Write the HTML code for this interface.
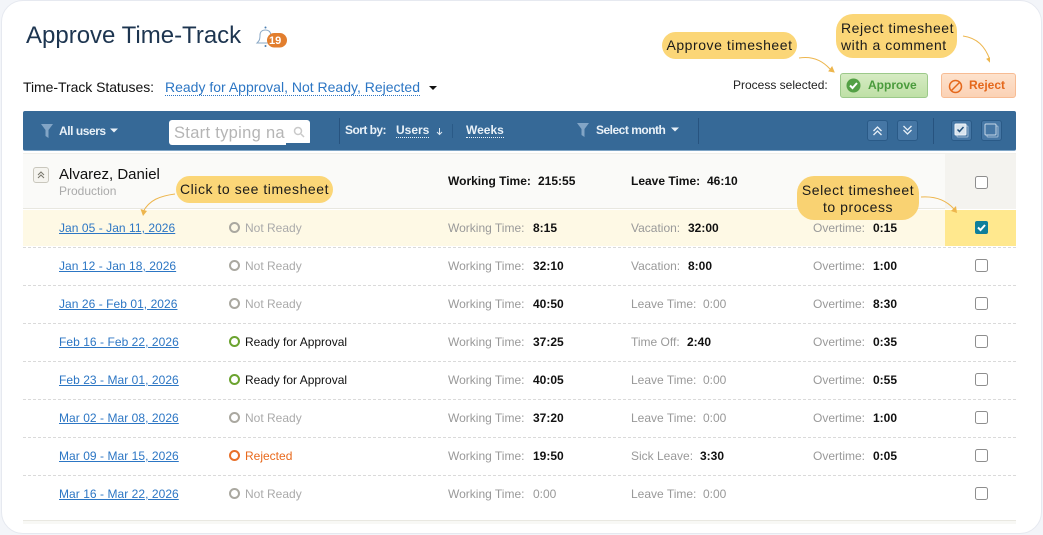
<!DOCTYPE html>
<html><head><meta charset="utf-8">
<style>
html,body{margin:0;padding:0;width:1043px;height:535px;overflow:hidden;background:#f3f5f9}
*{box-sizing:border-box}
#c{position:absolute;left:1px;top:0;width:1041px;height:534px;background:#fff;border:1px solid #e6e9f0;border-radius:22px}
.t,.a{position:absolute}
.t{white-space:nowrap;font-family:"Liberation Sans",sans-serif;font-size:12px;line-height:14px;color:#000}
.g{color:#999}
.b{font-weight:bold;color:#111}
.l{color:#2c76c4;text-decoration:underline;font-size:12px;letter-spacing:.05px}
.call{position:absolute;background:#fbd677;border-radius:14px;font-family:"Liberation Sans",sans-serif;font-size:14px;letter-spacing:.55px;line-height:17px;color:#1a1a1a;text-align:center;white-space:nowrap}
.cb{position:absolute;left:975px;width:13px;height:13px;border:1.5px solid #8e8e8e;border-radius:2.5px;background:#fff}
.dash{position:absolute;left:23px;width:993px;height:1px;background:repeating-linear-gradient(90deg,#dadada 0 3px,transparent 3px 5px)}
.dot{position:absolute;left:229px;width:11px;height:11px;border-radius:50%;border:2px solid #aaa8a0}
.tb{position:absolute;top:120px;width:21px;height:21px;background:#4677a5;border:1px solid #2a5a87;border-radius:3px}
.sep{position:absolute;width:1px;background:#27537f}
.w{color:#e9f1f8;font-weight:bold}
</style></head><body>
<div id="c"></div>
<div class="t" style="left:26px;top:21px;font-size:24px;line-height:30px;color:#1d3550">Approve Time-Track</div>
<svg class="a" style="left:255px;top:26px" width="36" height="24" viewBox="0 0 36 24"><circle cx="10.5" cy="1.5" r="1" fill="#4a7fb0"/><path d="M2 17c2-2 3-3 3-8 0-3 2-5 5.500-5s5 2 5.500 5c.5 4 1 6 3 8z" fill="none" stroke="#8aa8c6" stroke-width="1"/><circle cx="10.500" cy="20" r="1" fill="#4a7fb0"/><rect x="12" y="7" width="20" height="14.500" rx="7.250" fill="#e27e2e"/></svg>
<div class="t" style="left:269px;top:34px;font-size:11px;font-weight:bold;color:#fff">19</div>

<div class="t" style="left:23px;top:79px;font-size:14px;line-height:16px;color:#111;letter-spacing:-.05px">Time-Track Statuses:</div>
<div class="t" style="left:165px;top:79px;font-size:14px;line-height:16px;color:#2c76c4;border-bottom:1px dotted #2c76c4">Ready for Approval, Not Ready, Rejected</div>
<svg class="a" style="left:429px;top:85px" width="9" height="6"><path d="M0 1h8L4 5z" fill="#111"/></svg>

<div class="call" style="left:662px;top:32px;width:135px;height:27px;line-height:27px">Approve timesheet</div>
<div class="call" style="left:836px;top:14px;width:121px;height:44px;padding:6px 0 0 5px;border-radius:17px;text-align:left">Reject timesheet<br>with a comment</div>
<svg class="a" style="left:790px;top:30px" width="200" height="45" fill="none" stroke="#edb64e" stroke-width="1"><path d="M9 28c12-2 22 1 31 11"/><path d="M173 6c14 2 22 10 27 24" /><path d="M39 41l5 1-2-5z" fill="#edb64e"/><path d="M198 30l3 3 2-5z" fill="#edb64e" transform="translate(-1,-1)"/></svg>

<div class="t" style="left:733px;top:78px;color:#222">Process selected:</div>
<div class="a" style="left:840px;top:73px;width:88px;height:25px;border:1px solid #9cc98a;border-radius:3px;background:linear-gradient(#d6ebc3,#bfe0a6)"></div>
<svg class="a" style="left:846px;top:78px" width="15" height="15"><circle cx="7.500" cy="7.500" r="7" fill="#53a045"/><path d="M4 7.500l2.500 2.500 4.500-5" fill="none" stroke="#fff" stroke-width="2"/></svg>
<div class="t" style="left:868px;top:78px;font-weight:bold;color:#4a9b3c">Approve</div>
<div class="a" style="left:941px;top:73px;width:75px;height:25px;border:1px solid #f7bc94;border-radius:3px;background:linear-gradient(#fde2cd,#fbd2b5)"></div>
<svg class="a" style="left:948px;top:79px" width="15" height="15" fill="none" stroke="#e4681c" stroke-width="1.500"><circle cx="7.500" cy="7.500" r="6"/><path d="M3.500 11.500l8-8"/></svg>
<div class="t" style="left:969px;top:78px;font-weight:bold;color:#e4681c">Reject</div>

<div class="a" style="left:23px;top:111px;width:993px;height:40px;background:#366997;border-radius:2px;border-bottom:1px solid #7fa5c6"></div>
<svg class="a" style="left:41px;top:124px" width="12" height="14"><path d="M0 0h12L7.500 6v8l-3-2V6z" fill="#82a5c6"/></svg>
<div class="t w" style="left:59px;top:124px;letter-spacing:-.45px">All users</div>
<svg class="a" style="left:110px;top:128px" width="9" height="6"><path d="M0 .5h8L4 4.500z" fill="#e9f1f8"/></svg>
<div class="a" style="left:169px;top:120px;width:141px;height:25px;background:#fff;border-radius:3px"></div>
<div class="a" style="left:286px;top:143px;width:25px;height:3px;background:#366997"></div>
<div class="t" style="left:174px;top:123px;width:111px;overflow:hidden;font-size:16.500px;line-height:20px;color:#b5b5b5;letter-spacing:.3px">Start typing name</div>
<svg class="a" style="left:293px;top:126px" width="12" height="12" fill="none" stroke="#c9c9c9" stroke-width="1.500"><circle cx="5" cy="5" r="3.500"/><path d="M8 8l3 3"/></svg>
<div class="sep" style="left:339px;top:118px;height:26px"></div>
<div class="t w" style="left:345px;top:123px;letter-spacing:-.55px">Sort by:</div>
<div class="t w" style="left:396px;top:123px;border-bottom:1px dotted #e9f1f8">Users</div>
<svg class="a" style="left:435px;top:127px" width="9" height="9" fill="none" stroke="#dce7f1" stroke-width="1"><path d="M4.500 1v6M2 5l2.500 2.500L7 5"/></svg>
<div class="sep" style="left:452px;top:124px;height:14px;background:#2a5a87"></div>
<div class="t w" style="left:466px;top:123px;border-bottom:1px dotted #e9f1f8">Weeks</div>
<svg class="a" style="left:577px;top:123px" width="12" height="14"><path d="M0 0h12L7.500 6v8l-3-2V6z" fill="#82a5c6"/></svg>
<div class="t w" style="left:596px;top:123px;letter-spacing:-.5px">Select month</div>
<svg class="a" style="left:671px;top:127px" width="9" height="6"><path d="M0 .5h8L4 4.500z" fill="#e9f1f8"/></svg>
<div class="sep" style="left:698px;top:118px;height:26px"></div>
<div class="tb" style="left:867px"></div>
<svg class="a" style="left:867px;top:120px" width="21" height="21" fill="none" stroke="#e9f1f8" stroke-width="1.300"><path d="M6.500 11l4-4 4 4M6.500 15l4-4 4 4"/></svg>
<div class="tb" style="left:897px"></div>
<svg class="a" style="left:897px;top:120px" width="21" height="21" fill="none" stroke="#e9f1f8" stroke-width="1.300"><path d="M6.500 6l4 4 4-4M6.500 10l4 4 4-4"/></svg>
<div class="sep" style="left:933px;top:118px;height:26px"></div>
<div class="tb" style="left:951px"></div>
<svg class="a" style="left:951px;top:120px" width="21" height="21" fill="none"><rect x="6" y="6" width="11" height="11" rx="1" stroke="#9db9d3"/><rect x="4" y="4" width="11" height="11" rx="1" fill="#d8e4ee" stroke="#f0f5f9"/><path d="M6.500 9.500l2 2 4-4.500" stroke="#25527d" stroke-width="1.500"/></svg>
<div class="tb" style="left:981px"></div>
<svg class="a" style="left:981px;top:120px" width="21" height="21" fill="none"><rect x="6" y="6" width="11" height="11" rx="1" stroke="#9db9d3"/><rect x="4" y="4" width="11" height="11" rx="1" fill="#4677a5" stroke="#c6d7e6"/></svg>

<div class="a" style="left:23px;top:153px;width:993px;height:56px;background:#fafaf8;border-top:1px solid #f0efea;border-bottom:1px solid #e8e7e0"></div>
<div class="a" style="left:945px;top:154px;width:71px;height:55px;background:#f4f3ef"></div>
<div class="a" style="left:33px;top:167px;width:16px;height:16px;border:1px solid #c9c7bd;border-radius:3px;background:#f5f4ef"></div>
<svg class="a" style="left:33px;top:167px" width="16" height="16" fill="none" stroke="#77756b" stroke-width="1"><path d="M5 8l3-3 3 3M5 11l3-3 3 3"/></svg>
<div class="t" style="left:59px;top:166px;font-size:15px;line-height:17px;color:#111">Alvarez, Daniel</div>
<div class="t" style="left:59px;top:184px;color:#aaa">Production</div>
<div class="t b" style="left:448px;top:174px">Working Time:</div><div class="t b" style="left:538px;top:174px">215:55</div>
<div class="t b" style="left:631px;top:174px">Leave Time:</div><div class="t b" style="left:707px;top:174px">46:10</div>
<div class="cb" style="top:176px"></div>

<div class="a" style="left:23px;top:210px;width:922px;height:36px;background:#fef9e5"></div>
<div class="a" style="left:945px;top:210px;width:71px;height:36px;background:#ffe88e"></div>

<div class="dash" style="top:247px"></div><div class="dash" style="top:285px"></div><div class="dash" style="top:323px"></div><div class="dash" style="top:361px"></div><div class="dash" style="top:399px"></div><div class="dash" style="top:437px"></div><div class="dash" style="top:475px"></div>
<div class="a" style="left:23px;top:520px;width:993px;height:4px;background:#f8f8f5;border-top:1px solid #e9e8e1"></div>

<div class="t l" style="left:59px;top:221px">Jan 05 - Jan 11, 2026</div><div class="dot" style="top:222px"></div><div class="t" style="left:245px;top:221px;color:#aaa">Not Ready</div><div class="t g" style="left:448px;top:221px">Working Time:</div><div class="t b" style="left:533px;top:221px">8:15</div><div class="t g" style="left:631px;top:221px">Vacation:</div><div class="t b" style="left:688px;top:221px">32:00</div><div class="t g" style="left:813px;top:221px">Overtime:</div><div class="t b" style="left:873px;top:221px">0:15</div>
<div class="a" style="left:975px;top:221px;width:13px;height:13px;background:#0f7f9b;border-radius:2px"></div>
<svg class="a" style="left:975px;top:221px" width="13" height="13" fill="none" stroke="#fff" stroke-width="2"><path d="M3 6.500l2.500 2.500L10 4"/></svg>

<div class="t l" style="left:59px;top:259px">Jan 12 - Jan 18, 2026</div><div class="dot" style="top:260px"></div><div class="t" style="left:245px;top:259px;color:#aaa">Not Ready</div><div class="t g" style="left:448px;top:259px">Working Time:</div><div class="t b" style="left:533px;top:259px">32:10</div><div class="t g" style="left:631px;top:259px">Vacation:</div><div class="t b" style="left:688px;top:259px">8:00</div><div class="t g" style="left:813px;top:259px">Overtime:</div><div class="t b" style="left:873px;top:259px">1:00</div><div class="cb" style="top:259px"></div>

<div class="t l" style="left:59px;top:297px">Jan 26 - Feb 01, 2026</div><div class="dot" style="top:298px"></div><div class="t" style="left:245px;top:297px;color:#aaa">Not Ready</div><div class="t g" style="left:448px;top:297px">Working Time:</div><div class="t b" style="left:533px;top:297px">40:50</div><div class="t g" style="left:631px;top:297px">Leave Time:</div><div class="t g" style="left:703px;top:297px">0:00</div><div class="t g" style="left:813px;top:297px">Overtime:</div><div class="t b" style="left:873px;top:297px">8:30</div><div class="cb" style="top:297px"></div>

<div class="t l" style="left:59px;top:335px">Feb 16 - Feb 22, 2026</div><div class="dot" style="top:336px;border-color:#6ba32f"></div><div class="t" style="left:245px;top:335px;color:#111">Ready for Approval</div><div class="t g" style="left:448px;top:335px">Working Time:</div><div class="t b" style="left:533px;top:335px">37:25</div><div class="t g" style="left:631px;top:335px">Time Off:</div><div class="t b" style="left:687px;top:335px">2:40</div><div class="t g" style="left:813px;top:335px">Overtime:</div><div class="t b" style="left:873px;top:335px">0:35</div><div class="cb" style="top:335px"></div>

<div class="t l" style="left:59px;top:373px">Feb 23 - Mar 01, 2026</div><div class="dot" style="top:374px;border-color:#6ba32f"></div><div class="t" style="left:245px;top:373px;color:#111">Ready for Approval</div><div class="t g" style="left:448px;top:373px">Working Time:</div><div class="t b" style="left:533px;top:373px">40:05</div><div class="t g" style="left:631px;top:373px">Leave Time:</div><div class="t g" style="left:703px;top:373px">0:00</div><div class="t g" style="left:813px;top:373px">Overtime:</div><div class="t b" style="left:873px;top:373px">0:55</div><div class="cb" style="top:373px"></div>

<div class="t l" style="left:59px;top:411px">Mar 02 - Mar 08, 2026</div><div class="dot" style="top:412px"></div><div class="t" style="left:245px;top:411px;color:#aaa">Not Ready</div><div class="t g" style="left:448px;top:411px">Working Time:</div><div class="t b" style="left:533px;top:411px">37:20</div><div class="t g" style="left:631px;top:411px">Leave Time:</div><div class="t g" style="left:703px;top:411px">0:00</div><div class="t g" style="left:813px;top:411px">Overtime:</div><div class="t b" style="left:873px;top:411px">1:00</div><div class="cb" style="top:411px"></div>

<div class="t l" style="left:59px;top:449px">Mar 09 - Mar 15, 2026</div><div class="dot" style="top:450px;border-color:#e8702a"></div><div class="t" style="left:245px;top:449px;color:#e8691c">Rejected</div><div class="t g" style="left:448px;top:449px">Working Time:</div><div class="t b" style="left:533px;top:449px">19:50</div><div class="t g" style="left:631px;top:449px">Sick Leave:</div><div class="t b" style="left:700px;top:449px">3:30</div><div class="t g" style="left:813px;top:449px">Overtime:</div><div class="t b" style="left:873px;top:449px">0:05</div><div class="cb" style="top:449px"></div>

<div class="t l" style="left:59px;top:487px">Mar 16 - Mar 22, 2026</div><div class="dot" style="top:488px"></div><div class="t" style="left:245px;top:487px;color:#aaa">Not Ready</div><div class="t g" style="left:448px;top:487px">Working Time:</div><div class="t g" style="left:533px;top:487px">0:00</div><div class="t g" style="left:631px;top:487px">Leave Time:</div><div class="t g" style="left:703px;top:487px">0:00</div><div class="cb" style="top:487px"></div>

<div class="call" style="left:176px;top:176px;width:157px;height:27px;line-height:27px">Click to see timesheet</div>
<div class="call" style="left:797px;top:176px;width:122px;height:44px;padding-top:6px;border-radius:17px;background:#f9d272">Select timesheet<br>to process</div>
<svg class="a" style="left:140px;top:190px" width="40" height="30" fill="none" stroke="#edb64e"><path d="M35 4C20 6 9 10 3 22"/><path d="M.5 19l2.500 7 4-5z" fill="#edb64e" stroke="none"/></svg>
<svg class="a" style="left:918px;top:192px" width="45" height="30" fill="none" stroke="#edb64e"><path d="M3 5c14-1 25 3 33 12"/><path d="M38 14l-5 5 6 2z" fill="#edb64e" stroke="none"/></svg>
</body></html>
